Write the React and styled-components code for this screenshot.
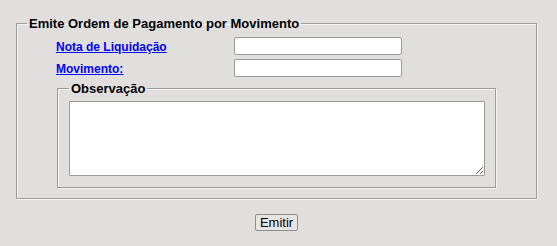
import React from 'react';
import styled, { createGlobalStyle } from 'styled-components';

const GlobalStyle = createGlobalStyle`
  html, body {
    margin: 0;
    padding: 0;
    background: #e0dfde;
    font-family: "Liberation Sans", Arial, sans-serif;
  }
`;

const Page = styled.div`
  padding: 16px 0 0 16px;
  width: 521px;
`;

const Group = styled.fieldset`
  margin: 0;
  width: ${(p) => p.$width}px;
  box-sizing: border-box;
  border: 1px solid #9c9c9c;
  box-shadow: 1px 1px 0 #f4f4f4, inset 1px 1px 0 #f4f4f4;
  padding: ${(p) => p.$padding};
`;

const Legend = styled.legend`
  padding: 0 2px;
  font-size: 13px;
  line-height: 15px;
  font-weight: bold;
  color: #000;
`;

const Fields = styled.div`
  display: grid;
  grid-template-columns: 178px 168px;
  row-gap: 4px;
  align-items: center;
  margin-left: 29px;
`;

const FieldLink = styled.a`
  color: #0000ff;
  font-size: 12px;
  font-weight: bold;
  text-decoration: underline;
  padding-top: 1px;
`;

const TextInput = styled.input`
  box-sizing: border-box;
  width: 168px;
  height: 18px;
  margin: 0;
  border: 1px solid #9a9a9a;
  border-radius: 2px;
  background: #fff;
  padding: 0 2px;
  font-size: 12px;
`;

const ObsArea = styled.div`
  margin: 4px 0 0 30px;
`;

const TextArea = styled.textarea`
  display: block;
  box-sizing: border-box;
  width: 416px;
  height: 75px;
  margin: 0;
  border: 1px solid #9a9a9a;
  border-radius: 1px;
  background: #fff;
  font-family: "Liberation Mono", monospace;
  font-size: 12px;
`;

const Actions = styled.div`
  display: flex;
  justify-content: center;
  padding-top: 15px;
`;

const Button = styled.button`
  box-sizing: border-box;
  height: 17px;
  padding: 0 4px;
  border: 1px solid #8d8d8d;
  border-radius: 2px;
  background: #e6e5e4;
  font-family: "Liberation Sans", Arial, sans-serif;
  font-size: 13px;
  line-height: 15px;
  color: #000;
`;

const App = () => {
  return (
    <>
      <GlobalStyle />
      <Page>
        <Group $width={521} $padding="6px 10px 10px 10px">
          <Legend>Emite Ordem de Pagamento por Movimento</Legend>
          <Fields>
            <FieldLink href="#">Nota de Liquidação</FieldLink>
            <TextInput type="text" />
            <FieldLink href="#">Movimento:</FieldLink>
            <TextInput type="text" />
          </Fields>
          <ObsArea>
            <Group $width={439} $padding="5px 10px 11px 11px">
              <Legend>Observação</Legend>
              <TextArea />
            </Group>
          </ObsArea>
        </Group>
        <Actions>
          <Button>Emitir</Button>
        </Actions>
      </Page>
    </>
  );
};

export default App;
